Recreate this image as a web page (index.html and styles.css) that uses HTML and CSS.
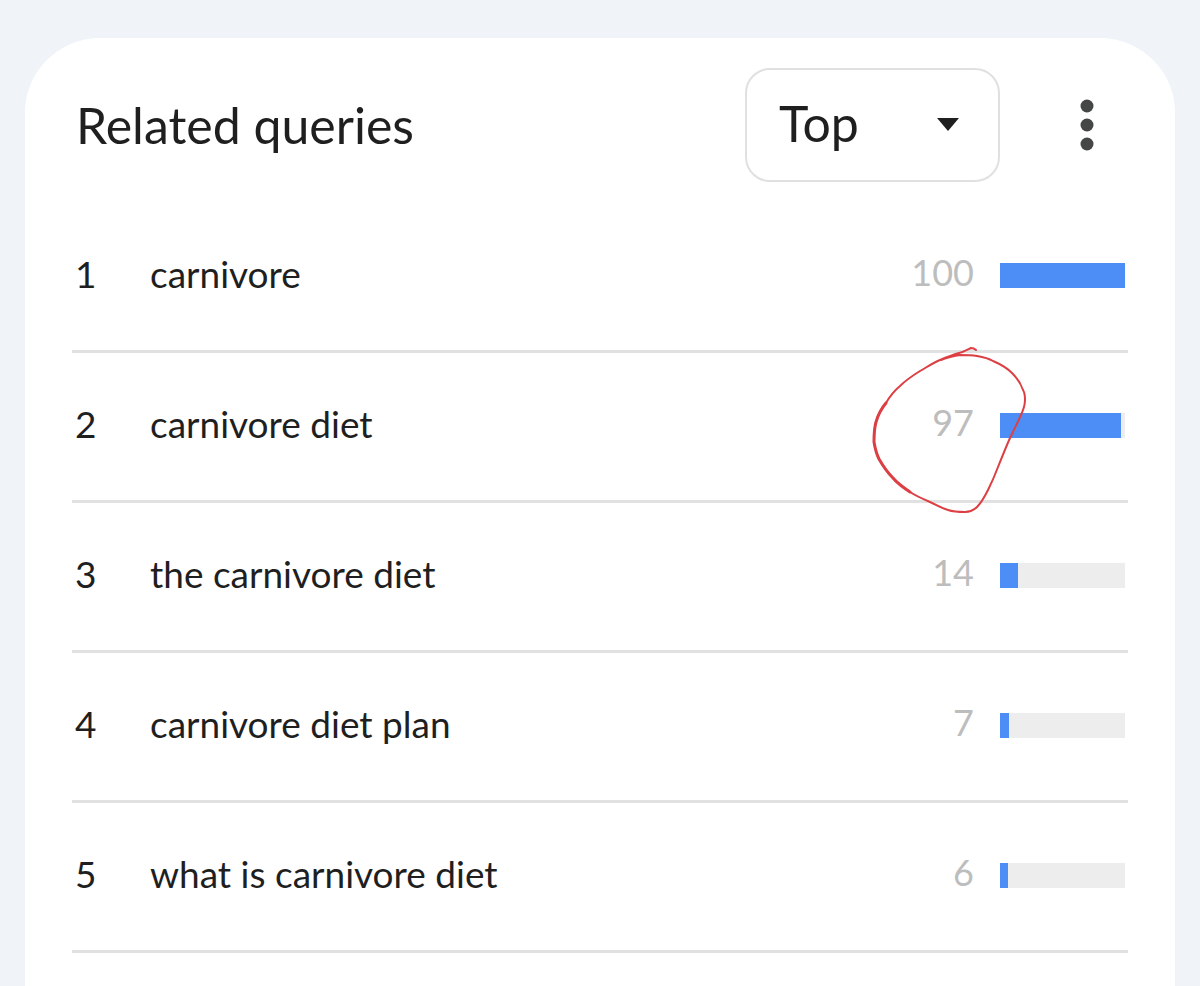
FILE: index.html
```html
<!DOCTYPE html>
<html lang="en">
<head>
    <meta charset="UTF-8">
    <meta name="viewport" content="width=device-width, initial-scale=1.0">
    <title>Related queries</title>
    <link rel="stylesheet" href="styles.css">
</head>
<body>
    <main class="card">
        <header class="card-header">
            <h1 class="title">Related queries</h1>
            <div class="select-wrap">
                <select id="sort" class="sort" aria-label="Sort queries">
                    <option value="top" selected>Top</option>
                    <option value="rising">Rising</option>
                </select>
                <svg class="arrow" viewBox="0 0 22 13" aria-hidden="true">
                    <path d="M0 0h22L11 13z"/>
                </svg>
            </div>
            <button class="menu-button" type="button" aria-label="More options">
                <svg class="dots" viewBox="0 0 14 52" aria-hidden="true">
                    <circle cx="7" cy="7" r="6.5"/>
                    <circle cx="7" cy="26" r="6.5"/>
                    <circle cx="7" cy="45" r="6.5"/>
                </svg>
            </button>
        </header>

        <table class="queries">
            <tbody>
                <tr>
                    <td class="rank">1</td>
                    <td class="query">carnivore</td>
                    <td class="value">100</td>
                    <td class="meter"><div class="track"><div class="fill" style="width: 100%"></div></div></td>
                </tr>
                <tr>
                    <td class="rank">2</td>
                    <td class="query">carnivore diet</td>
                    <td class="value">
                        97
                        <svg class="scribble" viewBox="0 0 160 172" aria-hidden="true">
                            <path d="M106 5C104 3 103 3 101 3C97 5 94 7 89 8C82 10 77 12 70 15C63 18 57 22 50 26C42 31 36 35 30 41C24 46 20 51 16 58C11 64 8 70 6 77C4 84 4 90 4 97C5 103 6 108 9 114C13 121 17 127 23 133C28 139 34 143 40 147C46 151 53 154 60 157C67 160 71 163 78 165C84 167 89 167 95 167C101 167 104 165 107 162C112 157 115 151 118 145C122 137 125 130 128 122C132 112 136 102 140 93C144 85 147 79 150 72C153 66 155 60 155 55C155 51 155 48 153 45C151 39 147 33 142 28C137 23 130 19 123 16C118 13 113 12 107 11C101 10 96 10 90 10C84 11 78 12 71 15"/>
                            <path class="heavy" d="M16 58C11 64 8 70 6 77C4 84 4 90 4 97C5 103 6 108 9 114C13 121 17 127 23 133C28 139 34 143 40 147"/>
                        </svg>
                    </td>
                    <td class="meter"><div class="track"><div class="fill" style="width: 97%"></div></div></td>
                </tr>
                <tr>
                    <td class="rank">3</td>
                    <td class="query">the carnivore diet</td>
                    <td class="value">14</td>
                    <td class="meter"><div class="track"><div class="fill" style="width: 14%"></div></div></td>
                </tr>
                <tr>
                    <td class="rank">4</td>
                    <td class="query">carnivore diet plan</td>
                    <td class="value">7</td>
                    <td class="meter"><div class="track"><div class="fill" style="width: 7%"></div></div></td>
                </tr>
                <tr>
                    <td class="rank">5</td>
                    <td class="query">what is carnivore diet</td>
                    <td class="value">6</td>
                    <td class="meter"><div class="track"><div class="fill" style="width: 6%"></div></div></td>
                </tr>
            </tbody>
        </table>
    </main>
</body>
</html>
```

FILE: styles.css
```css
* {
    box-sizing: border-box;
}

body {
    display: flex;
    min-height: 100vh;
    margin: 0;
    padding: 38px 25px 0;
    background: #f0f4f9;
    color: #1f1f1f;
    font-family: Lato, "Liberation Sans", sans-serif;
}

.card {
    flex: 1;
    padding: 30px 47px 0;
    background: #fff;
    border-radius: 75px 75px 0 0;
}

.card-header {
    display: flex;
    align-items: center;
    margin-bottom: 21px;
    padding: 0 21px 0 4px;
}

.title {
    flex: 1;
    margin: 0;
    font-size: 50px;
    font-weight: 400;
    line-height: 60px;
}

.select-wrap {
    position: relative;
    width: 255px;
}

.sort {
    display: block;
    width: 100%;
    height: 114px;
    padding: 0 80px 4px 32px;
    appearance: none;
    background: #fff;
    border: 2px solid #e0e0e0;
    border-radius: 25px;
    color: inherit;
    font-family: inherit;
    font-size: 50px;
}

.arrow {
    position: absolute;
    top: 50px;
    right: 41px;
    width: 22px;
    height: 13px;
    fill: #1f1f1f;
    pointer-events: none;
}

.menu-button {
    display: flex;
    justify-content: center;
    width: 40px;
    margin-left: 67px;
    padding: 0;
    background: none;
    border: 0;
}

.dots {
    width: 14px;
    height: 52px;
    fill: #444746;
}

.queries {
    width: 100%;
    border-spacing: 0;
    font-size: 37px;
    line-height: 44px;
}

.queries td {
    height: 150px;
    padding: 0 0 6px;
    border-bottom: 3px solid #e1e1e1;
}

.queries .rank {
    width: 78px;
    padding-left: 3px;
}

.queries .value {
    position: relative;
    width: 120px;
    padding: 0 26px 10px 0;
    color: #bdbdbd;
    font-size: 36px;
    text-align: right;
}

.queries .meter {
    width: 128px;
    padding: 0 3px 2px 0;
}

.track {
    height: 25px;
    background: #ededed;
}

.fill {
    height: 100%;
    background: #4c8df6;
}

/* hand-drawn ring, spills over the neighbouring cells */
.scribble {
    position: absolute;
    top: -8px;
    right: -30px;
    width: 160px;
    height: 172px;
    fill: none;
    stroke: #dc4044;
    stroke-width: 2;
    stroke-linecap: round;
    pointer-events: none;
}

.scribble .heavy {
    stroke-width: 3;
}
```
